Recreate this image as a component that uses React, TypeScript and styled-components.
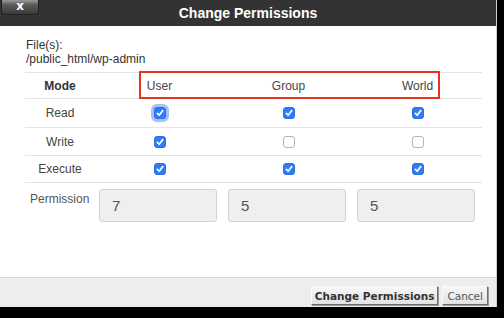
import React from "react";
import styled, { createGlobalStyle } from "styled-components";

const GlobalStyle = createGlobalStyle`
  html, body {
    margin: 0;
    padding: 0;
    background: #000;
    width: 504px;
    height: 318px;
    overflow: hidden;
  }
  body {
    font-family: "Liberation Sans", Arial, sans-serif;
  }
`;

const Dialog = styled.div`
  width: 497px;
  height: 307px;
  background: #fff;
  display: flex;
  flex-direction: column;
  box-sizing: border-box;
  border-right: 1px solid #cfcfcf;
`;

const TitleBar = styled.div`
  height: 26px;
  flex: none;
  background: #333;
  display: grid;
  grid-template-columns: 1fr auto 1fr;
  align-items: start;
`;

const CloseButton = styled.div`
  justify-self: start;
  margin-left: 1px;
  width: 38px;
  height: 15px;
  box-sizing: border-box;
  border: 1px solid #1f1f1f;
  border-top: none;
  border-radius: 0 0 4px 4px;
  background: linear-gradient(#9a9a9a 0%, #5a5a5a 35%, #3a3a3a 100%);
  box-shadow: 0 1px 1px rgba(40, 60, 90, 0.6);
  color: #fff;
  font-family: "DejaVu Sans", sans-serif;
  font-weight: bold;
  font-size: 12px;
  line-height: 12px;
  text-align: center;
`;

const Title = styled.div`
  color: #fff;
  font-weight: bold;
  font-size: 14px;
  line-height: 26px;
  white-space: nowrap;
`;

const Body = styled.div`
  flex: 1;
  padding: 12px 15px 0 25px;
  color: #333;
  font-size: 12px;
`;

const FileInfo = styled.div`
  line-height: 14px;
  margin-left: 1px;
`;

const Table = styled.div`
  position: relative;
  margin-top: 6px;
  width: 457px;
`;

const Row = styled.div<{ $h: number; $last?: boolean }>`
  display: grid;
  grid-template-columns: 70px 129px 129px 129px;
  align-items: center;
  height: ${(p) => p.$h}px;
  box-sizing: border-box;
  border-top: 1px solid #e4e4e4;
  border-bottom: ${(p) => (p.$last ? "1px solid #e4e4e4" : "none")};
`;

const Cell = styled.div<{ $bold?: boolean }>`
  display: flex;
  justify-content: center;
  align-items: center;
  font-weight: ${(p) => (p.$bold ? "bold" : "normal")};
  color: ${(p) => (p.$bold ? "#333" : "#444")};
  font-size: 12px;
`;

const Highlight = styled.div`
  position: absolute;
  left: 114px;
  top: -1px;
  width: 301px;
  height: 28px;
  box-sizing: border-box;
  border: 2px solid #e8341d;
  pointer-events: none;
`;

const Box = styled.span<{ $checked: boolean; $focus?: boolean }>`
  width: 12px;
  height: 12px;
  box-sizing: border-box;
  border-radius: 3px;
  display: inline-flex;
  align-items: center;
  justify-content: center;
  background: ${(p) => (p.$checked ? "#2f7cf6" : "#fff")};
  border: 1px solid ${(p) => (p.$checked ? "#2a6fe0" : "#b5b5b5")};
  box-shadow: ${(p) =>
    p.$focus ? "0 0 0 3px rgba(90, 140, 245, 0.55)" : "none"};
`;

const Check: React.FC<{ checked: boolean; focus?: boolean }> = ({
  checked,
  focus,
}) => (
  <Box $checked={checked} $focus={focus}>
    {checked && (
      <svg width="10" height="10" viewBox="0 0 10 10">
        <polyline
          points="2.3,5.3 4.2,7.2 7.8,2.6"
          fill="none"
          stroke="#fff"
          strokeWidth="1.7"
          strokeLinecap="round"
          strokeLinejoin="round"
        />
      </svg>
    )}
  </Box>
);

const PermRow = styled.div`
  display: grid;
  grid-template-columns: 63px 118px 118px 118px;
  column-gap: 11px;
  margin-top: 6px;
`;

const PermLabel = styled.div`
  padding: 3px 0 0 5px;
  color: #555;
  font-size: 12px;
  line-height: 14px;
`;

const PermInput = styled.div`
  height: 33px;
  box-sizing: border-box;
  border: 1px solid #d2d2d2;
  border-radius: 3px;
  background: #efefef;
  color: #555;
  font-size: 15px;
  line-height: 31px;
  padding-left: 12px;
`;

const Footer = styled.div`
  height: 30px;
  flex: none;
  box-sizing: border-box;
  background: #ededed;
  border-top: 1px solid #d8d8d8;
  display: flex;
  justify-content: flex-end;
  align-items: flex-end;
  gap: 4px;
  padding: 0 8px 2px 0;
`;

const Button = styled.button<{ $primary?: boolean }>`
  height: 19px;
  box-sizing: border-box;
  padding: 0 ${(p) => (p.$primary ? "3px" : "4px")};
  font-family: "DejaVu Sans", Verdana, sans-serif;
  font-size: 10.5px;
  font-weight: ${(p) => (p.$primary ? "bold" : "normal")};
  color: ${(p) => (p.$primary ? "#333" : "#555")};
  background: linear-gradient(#f7f7f7, #e2e2e2);
  border: 1px solid;
  border-color: #fafafa #6e6e6e #6e6e6e #fafafa;
  box-shadow: 1px 1px 0 #9a9a9a;
  border-radius: 0;
  white-space: nowrap;
`;

const modes = [
  { name: "Read", vals: [true, true, true], h: 29 },
  { name: "Write", vals: [true, false, false], h: 28 },
  { name: "Execute", vals: [true, true, true], h: 28 },
];

export default function App() {
  return (
    <>
      <GlobalStyle />
      <Dialog>
        <TitleBar>
          <CloseButton>x</CloseButton>
          <Title>Change Permissions</Title>
          <div />
        </TitleBar>
        <Body>
          <FileInfo>
            File(s):
            <br />
            /public_html/wp-admin
          </FileInfo>
          <Table>
            <Row $h={26}>
              <Cell $bold>Mode</Cell>
              <Cell>User</Cell>
              <Cell>Group</Cell>
              <Cell>World</Cell>
            </Row>
            {modes.map((m, i) => (
              <Row key={m.name} $h={m.h} $last={i === modes.length - 1}>
                <Cell>{m.name}</Cell>
                {m.vals.map((v, j) => (
                  <Cell key={j}>
                    <Check checked={v} focus={i === 0 && j === 0} />
                  </Cell>
                ))}
              </Row>
            ))}
            <Highlight />
          </Table>
          <PermRow>
            <PermLabel>Permission</PermLabel>
            <PermInput>7</PermInput>
            <PermInput>5</PermInput>
            <PermInput>5</PermInput>
          </PermRow>
        </Body>
        <Footer>
          <Button $primary>Change Permissions</Button>
          <Button>Cancel</Button>
        </Footer>
      </Dialog>
    </>
  );
}
